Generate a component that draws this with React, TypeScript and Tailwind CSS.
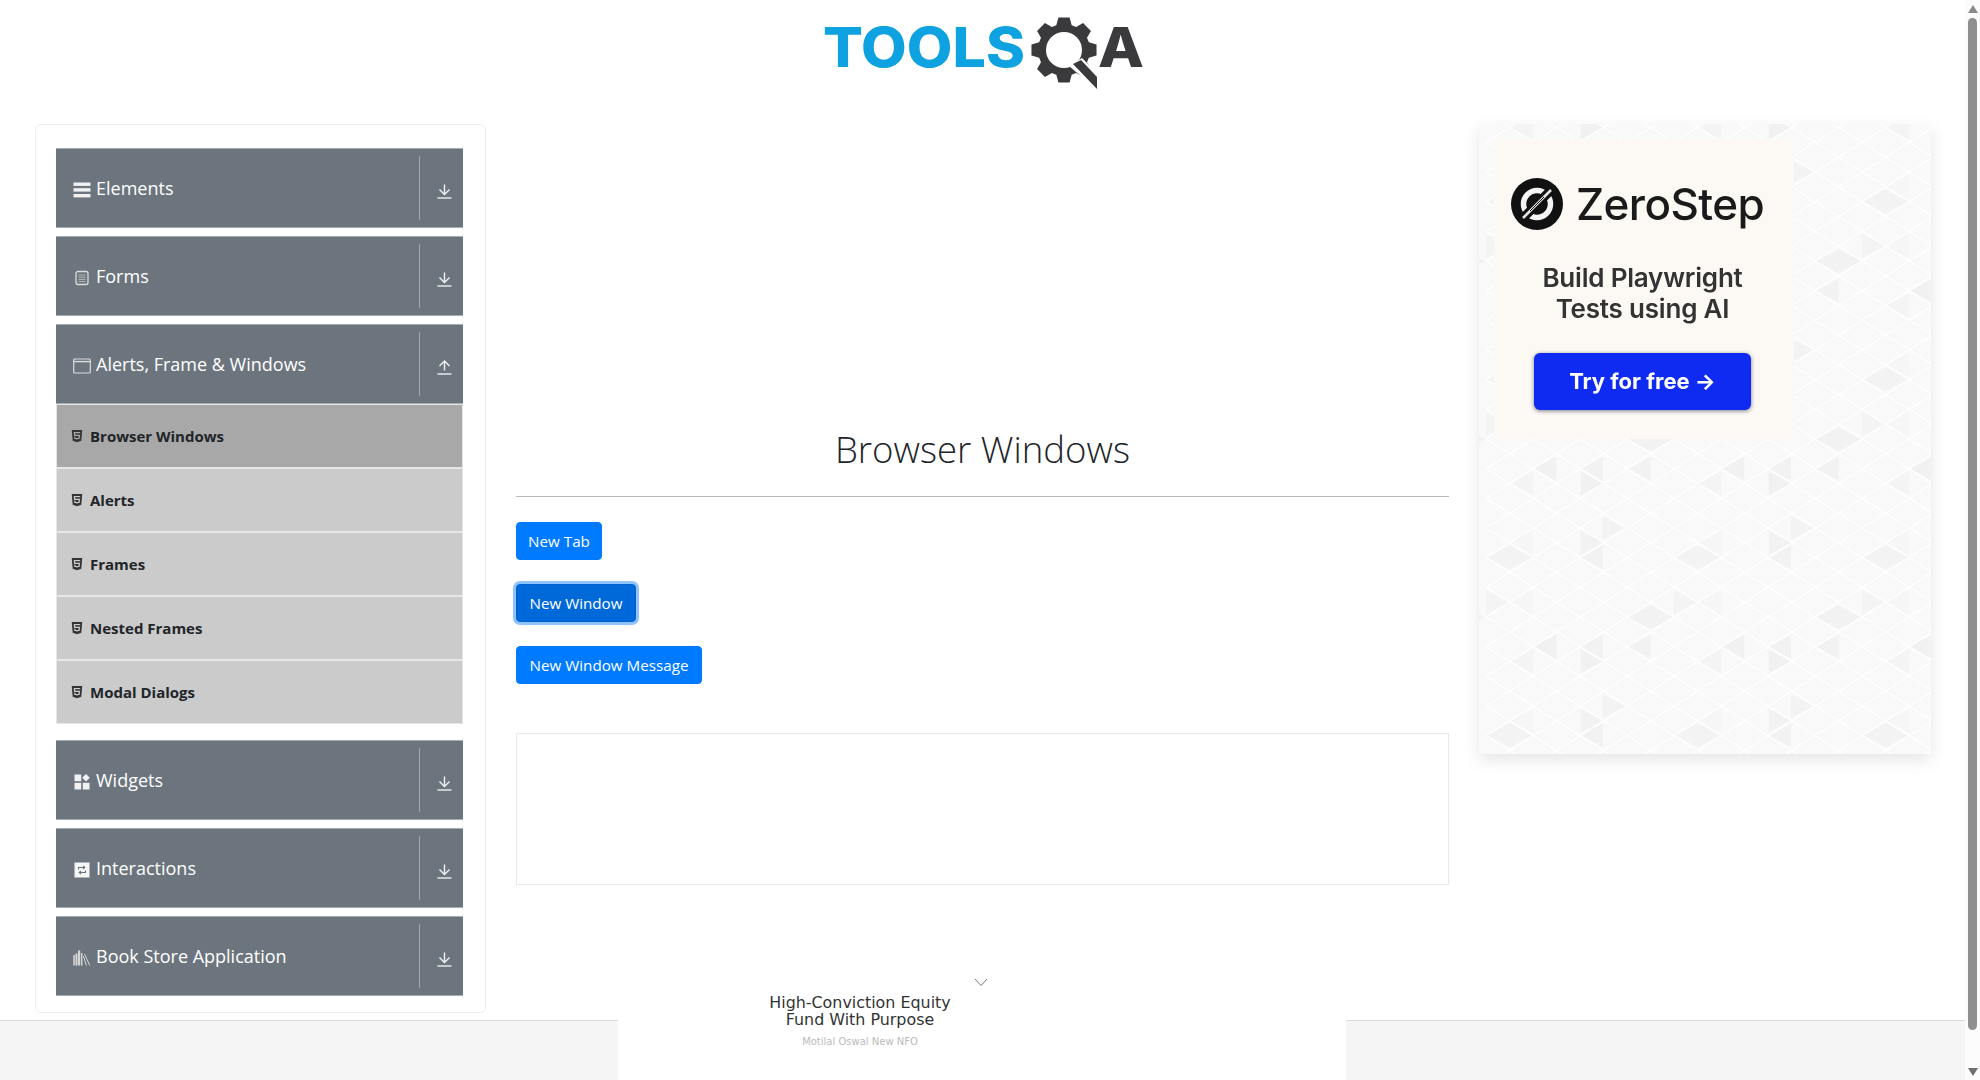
import { FaHtml5 } from "react-icons/fa";

const H1_FONT = "font-['Open_Sans',sans-serif]";

// gear outline for the logo, 8 teeth around (1064, 50)
const gearPath = () => {
  const cx = 1064;
  const cy = 50;
  const pts: string[] = [];
  for (let i = 0; i < 8; i++) {
    const a = (i * Math.PI) / 4 - Math.PI / 2;
    const spots: [number, number][] = [
      [-0.3, 26],
      [-0.17, 33],
      [0.17, 33],
      [0.3, 26],
    ];
    spots.forEach(([d, r]) => {
      pts.push(`${cx + r * Math.cos(a + d)},${cy + r * Math.sin(a + d)}`);
    });
  }
  return "M" + pts.join("L") + "Z";
};

const Logo = () => (
  <svg viewBox="818 0 330 100" className="w-[330px] h-[100px]">
    <text
      x="823"
      y="67"
      textLength="202"
      lengthAdjust="spacingAndGlyphs"
      fontFamily="Inter, sans-serif"
      fontWeight="800"
      fontSize="55"
      fill="#0ea2e0"
    >
      TOOLS
    </text>
    <path d={gearPath()} fill="#3a3a3c" />
    <circle cx="1064" cy="50" r="18" fill="#fff" />
    <path d="M1069 66L1082 58L1102 78V94Z" fill="#fff" />
    <path d="M1073 64L1081 60L1097 77V89Z" fill="#3a3a3c" />
    <text
      x="1098"
      y="67"
      textLength="46"
      lengthAdjust="spacingAndGlyphs"
      fontFamily="Inter, sans-serif"
      fontWeight="800"
      fontSize="55"
      fill="#3a3a3c"
    >
      A
    </text>
  </svg>
);

const BarsIcon = () => (
  <svg viewBox="0 0 18 16" className="w-[18px] h-[16px]" fill="#f1f1f1">
    <rect x="0.5" y="0.5" width="17" height="3.4" />
    <rect x="0.5" y="6.2" width="17" height="3.4" />
    <rect x="0.5" y="12" width="17" height="3.4" />
  </svg>
);

const FormIcon = () => (
  <svg viewBox="0 0 18 16" className="w-[18px] h-[16px]" fill="none" stroke="#dcdcdc">
    <rect x="3" y="1.5" width="12" height="13" rx="2" strokeWidth="1.3" />
    <path d="M5.5 5h7M5.5 7.2h7M5.5 9.4h7M5.5 11.6h7" strokeWidth="1" stroke="#b5b8bb" />
  </svg>
);

const WindowIcon = () => (
  <svg viewBox="0 0 18 16" className="w-[18px] h-[16px]" fill="none" stroke="#dcdcdc">
    <rect x="0.7" y="1" width="16.6" height="14" rx="1" strokeWidth="1.2" />
    <path d="M0.7 3.6h16.6" strokeWidth="1.4" />
  </svg>
);

const WidgetIcon = () => (
  <svg viewBox="0 0 18 16" className="w-[18px] h-[16px]" fill="#f1f1f1">
    <rect x="1.5" y="0.5" width="6.7" height="6.7" />
    <path d="M13 0L16.8 3.8L13 7.6L9.2 3.8Z" />
    <rect x="1.5" y="8.8" width="6.7" height="6.7" />
    <rect x="9.8" y="8.8" width="6.7" height="6.7" />
  </svg>
);

const SwapIcon = () => (
  <svg viewBox="0 0 18 16" className="w-[18px] h-[16px]">
    <rect x="1.5" y="0.5" width="15" height="15" fill="#f6f6f6" />
    <path
      d="M5.5 7.5V5.5h6M10 3.8l1.8 1.7L10 7.2M12.5 8.5v2h-6M8 12.2l-1.8-1.7L8 8.8"
      fill="none"
      stroke="#6c757d"
      strokeWidth="1.1"
    />
  </svg>
);

const BookIcon = () => (
  <svg viewBox="0 0 18 16" className="w-[18px] h-[16px]" fill="#d5d5d5">
    <rect x="0.3" y="5" width="1.6" height="10.5" />
    <rect x="2.5" y="3.5" width="2" height="12" />
    <rect x="5" y="0.5" width="2.2" height="15" />
    <rect x="8" y="3" width="1.4" height="12.5" />
    <path d="M11.5 4L16.8 15.5" stroke="#d5d5d5" strokeWidth="1" fill="none" />
    <path d="M10.4 6L13.4 15.5" stroke="#d5d5d5" strokeWidth="1" fill="none" />
  </svg>
);

const ArrowIcon = ({ up }: { up?: boolean }) => (
  <svg viewBox="0 0 15 15" className="w-[15px] h-[15px]" fill="none" stroke="#f1f1f1" strokeWidth="1.4">
    {up ? <path d="M7.5 10.5V1M2.5 6l5-5 5 5" /> : <path d="M7.5 0.5V10.5M2.5 5.5l5 5 5-5" />}
    <path d="M0.5 14h14" />
  </svg>
);

const GroupBar = ({ label, icon, open }: { label: string; icon: React.ReactNode; open?: boolean }) => (
  <div className="h-[80px] bg-[#6c757d] border-y border-[#a9aeb3] flex items-center">
    <div className="flex-1 flex items-center pl-[17px] gap-[5px]">
      <span className="mt-[3px] flex">{icon}</span>
      <span className="text-[18px] leading-[24px] text-white -mt-px">{label}</span>
    </div>
    <div className="h-[64px] border-l border-[#a3a8ad] w-[44px] flex items-center pl-[17px] pt-[6px]">
      <ArrowIcon up={open} />
    </div>
  </div>
);

const SubRow = ({ label, active }: { label: string; active?: boolean }) => (
  <div
    className={`h-[64px] border border-[#e6e6e6] flex items-center pl-[14px] gap-[7px] ${
      active ? "bg-[#a8a8a8]" : "bg-[#cbcbcb]"
    }`}
  >
    <FaHtml5 className="w-[12px] h-[14px] text-[#333]" />
    <span className="text-[15px] font-bold text-[#212529]">{label}</span>
  </div>
);

const Sidebar = () => (
  <div className="w-[451px] h-[889px] shrink-0 border border-[#eeeeee] rounded-md bg-white pt-[23px] pl-[20px] pr-[22px] flex flex-col gap-[8px]">
    <GroupBar label="Elements" icon={<BarsIcon />} />
    <GroupBar label="Forms" icon={<FormIcon />} />
    <div>
      <GroupBar label="Alerts, Frame & Windows" icon={<WindowIcon />} open />
      <SubRow label="Browser Windows" active />
      <SubRow label="Alerts" />
      <SubRow label="Frames" />
      <SubRow label="Nested Frames" />
      <SubRow label="Modal Dialogs" />
    </div>
    <div className="mt-[8px] flex flex-col gap-[8px]">
      <GroupBar label="Widgets" icon={<WidgetIcon />} />
      <GroupBar label="Interactions" icon={<SwapIcon />} />
      <GroupBar label="Book Store Application" icon={<BookIcon />} />
    </div>
  </div>
);

const Content = () => (
  <div className="w-[933px] shrink-0 pt-[301px]">
    <h1 className={`text-[36.6px] leading-[48px] font-light text-center text-[#212529] ${H1_FONT}`}>Browser Windows</h1>
    <div className="mt-[23px] border-t border-[#b8b8b8]" />
    <div className="mt-[25px] flex flex-col items-start gap-[24px]">
      <button className="h-[38px] w-[86px] pt-px rounded bg-[#007bff] text-white text-[15.2px] border border-[#007bff]">
        New Tab
      </button>
      <button className="h-[38px] w-[120px] pt-px rounded bg-[#0069d9] text-white text-[15.2px] border border-[#0062cc] ring-[3px] ring-[#8fc3ff]">
        New Window
      </button>
      <button className="h-[38px] w-[186px] pt-px rounded bg-[#007bff] text-white text-[15.2px] border border-[#007bff]">
        New Window Message
      </button>
    </div>
    <div className="mt-[49px] h-[152px] border border-[#e9e9e9]" />
  </div>
);

// hand-read from the ad background: [x, y, direction, shade]
const DARK_TRIANGLES: [number, number, number, string][] = [
  [232, 116, -1, "#f1f1f1"],
  [372, 116, -1, "#f2f2f2"],
  [515, 116, -1, "#f2f2f2"],
  [162, 160, -1, "#f4f4f4"],
  [305, 160, 1, "#f1f1f1"],
  [372, 294, 1, "#f3f3f3"],
  [305, 338, 1, "#f2f2f2"],
  [162, 338, -1, "#f6f6f6"],
  [92, 382, -1, "#f3f3f3"],
  [92, 382, 1, "#f3f3f3"],
  [372, 382, -1, "#f2f2f2"],
  [22, 516, 1, "#f4f4f4"],
  [162, 516, -1, "#f6f6f6"],
  [585, 516, 1, "#f5f5f5"],
  [515, 562, -1, "#f2f2f2"],
  [515, 562, 1, "#f2f2f2"],
];

const AdPattern = () => {
  const tris: string[] = [];
  const fills: string[] = [];
  for (let nx = -1; nx < 4; nx++) {
    for (let ny = -1; ny < 3; ny++) {
      DARK_TRIANGLES.forEach(([zx, zy, dir, shade]) => {
        const x = zx / 3 + nx * 188;
        const y = zy / 3 + 306 + (ny - 1) * 178;
        tris.push(`${x},${y - 12} ${x},${y + 12} ${x + dir * 22.5},${y}`);
        fills.push(shade);
      });
    }
  }
  let lines = "";
  for (let k = -1; k < 21; k++) {
    const x = (92 + 70.5 * k) / 3;
    const even = (k + 200) % 2 === 0;
    for (let j = -1; j < 23; j++) {
      const y = (71.5 + 89 * j) / 3 + (even ? 0 : 14.83) + 306 - 178 * 2;
      lines += `M${x},${y}L${x + 23.5},${y + (even ? 14.83 : -14.83)}`;
      lines += `M${x},${y}L${x + 23.5},${y + (even ? -14.83 : 14.83)}`;
    }
  }
  return (
    <svg viewBox="0 0 452 630" className="absolute inset-0 w-full h-full">
      <rect width="452" height="630" fill="#f9f9f9" />
      {tris.map((p, i) => (
        <polygon key={i} points={p} fill={fills[i]} />
      ))}
      <path d={lines} stroke="#ffffff" strokeWidth="1.2" fill="none" />
    </svg>
  );
};

const ZeroStepMark = () => (
  <svg viewBox="0 0 52 52" className="w-[52px] h-[52px] shrink-0">
    <circle cx="26" cy="26" r="26" fill="#111" />
    <circle cx="26" cy="26" r="13.5" fill="none" stroke="#f4f4f4" strokeWidth="5.5" />
    <path d="M9 43L43 9" stroke="#111" strokeWidth="9" />
    <path d="M12 40L40 12" stroke="#e6e6e6" strokeWidth="2.5" />
    <path d="M19 33L33 19" stroke="#111" strokeWidth="1" />
  </svg>
);

const SideAd = () => (
  <div className="relative w-[452px] h-[630px] shrink-0 shadow-[0_6px_16px_rgba(0,0,0,0.1)] font-['Inter',sans-serif]">
    <AdPattern />
    <div className="absolute left-[15px] top-[15px] w-[300px] h-[300px] bg-[#fcf8f3] flex flex-col items-center pt-[39px] pr-[3px] blur-[0.4px]">
      <div className="self-start ml-[17px] flex items-center gap-[13px] h-[52px]">
        <ZeroStepMark />
        <span className="text-[44px] font-medium text-[#1a1a1a] leading-none tracking-[-0.6px]">ZeroStep</span>
      </div>
      <p className="mt-[32px] text-[26px] leading-[31px] font-semibold text-center text-[#333] tracking-[-0.2px]">
        Build Playwright
        <br />
        Tests using AI
      </p>
      <div className="mt-[29px] w-[217px] h-[57px] rounded-md bg-[#0f2bf2] shadow-[0_1px_4px_rgba(0,0,40,0.5)] flex items-center justify-center text-white font-bold text-[22px]">
        Try for free →
      </div>
    </div>
  </div>
);

const BottomAd = () => (
  <div className="absolute left-[618px] bottom-0 w-[728px] h-[105px] bg-white font-['DejaVu_Sans',sans-serif]">
    <svg viewBox="0 0 14 9" className="absolute left-[356px] top-[3px] w-[14px] h-[9px]" fill="none" stroke="#777" strokeWidth="1">
      <path d="M1 1l6 6.5L13 1" />
    </svg>
    <div className="w-[484px] pt-[19px] text-center">
      <p className="text-[15.9px] leading-[17px] text-[#333]">
        High-Conviction Equity
        <br />
        Fund With Purpose
      </p>
      <p className="mt-[8px] text-[10px] leading-[12px] text-[#bbb]">Motilal Oswal New NFO</p>
    </div>
  </div>
);

const Scrollbar = () => (
  <div className="w-[15px] shrink-0 bg-[#fcfcfc] flex flex-col items-center h-screen">
    <svg viewBox="0 0 10 8" className="w-[10px] h-[8px] mt-[5px] shrink-0" fill="#8a8a8a">
      <path d="M5 0L10 8H0Z" />
    </svg>
    <div className="w-[9px] h-[1012px] mt-[5px] rounded-full bg-[#8f8f8f] shrink-0" />
    <svg viewBox="0 0 10 8" className="w-[10px] h-[8px] mt-[38px] shrink-0" fill="#6f6f6f">
      <path d="M5 8L10 0H0Z" />
    </svg>
  </div>
);

export default function App() {
  return (
    <div className={`relative flex h-screen w-full overflow-hidden bg-white ${H1_FONT}`}>
      <div className="flex-1 flex flex-col min-w-0">
        <header className="h-[124px] flex justify-center shrink-0">
          <Logo />
        </header>
        <main className="h-[896px] shrink-0 flex items-start pl-[35px] gap-[30px]">
          <Sidebar />
          <Content />
          <SideAd />
        </main>
        <footer className="flex-1 bg-[#f5f5f5] border-t border-[#dcdcdc]" />
      </div>
      <Scrollbar />
      <BottomAd />
    </div>
  );
}
